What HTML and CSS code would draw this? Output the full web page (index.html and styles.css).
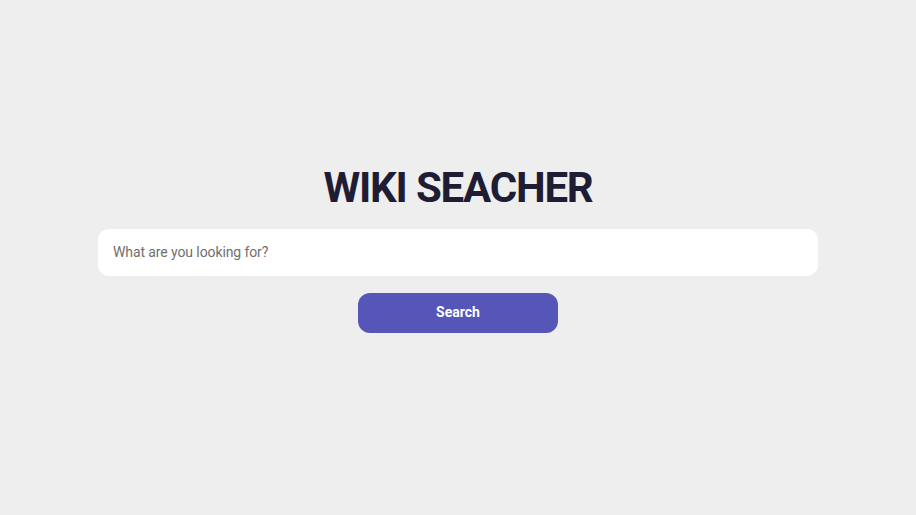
FILE: index.html
```html
<!DOCTYPE html>
<html lang="en">
<head>
<meta charset="utf-8">
<title>Wiki Searcher</title>
<link rel="stylesheet" href="styles.css">
</head>
<body>
<main class="app">
  <h1 class="title">WIKI SEACHER</h1>
  <form class="search-form">
    <input class="search-input" type="text" placeholder="What are you looking for?">
    <button class="search-button" type="button">Search</button>
  </form>
</main>
</body>
</html>
```
FILE: styles.css
```css
* { box-sizing: border-box; }
html, body { margin: 0; padding: 0; }
body {
  background: #eeeeee;
  font-family: Roboto, "Open Sans", sans-serif;
  height: 100vh;
}
.app {
  height: 100%;
  display: flex;
  flex-direction: column;
  align-items: center;
  padding-top: 163px;
}
.title {
  margin: 0;
  font-size: 42px;
  font-weight: 700;
  letter-spacing: -1.2px;
  color: #1f1d33;
  line-height: 50px;
}
.search-form {
  margin-top: 16px;
  display: flex;
  flex-direction: column;
  align-items: center;
  gap: 17px;
}
.search-input {
  width: 720px;
  height: 47px;
  border: none;
  border-radius: 11px;
  background: #ffffff;
  padding: 0 15px 2px;
  font-family: inherit;
  font-size: 14px;
  letter-spacing: -0.1px;
  color: #333;
  outline: none;
}
.search-input::placeholder { color: #6f6f6f; }
.search-button {
  width: 200px;
  height: 40px;
  border: none;
  border-radius: 12px;
  background: #5556b8;
  color: #ffffff;
  font-family: inherit;
  font-weight: 700;
  font-size: 14px;
  padding: 0 0 3px;
  cursor: pointer;
}
```
